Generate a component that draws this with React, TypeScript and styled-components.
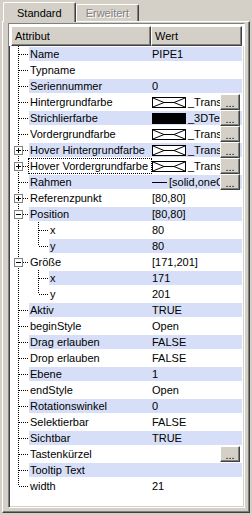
import React from 'react';
import styled, {createGlobalStyle} from 'styled-components';

const GlobalStyle = createGlobalStyle`
  html, body {
    margin: 0;
    padding: 0;
    background: #d4d0c8;
  }
  body {
    font-family: "Liberation Sans", Arial, sans-serif;
    font-size: 11px;
    color: #000;
  }
`;

const Window = styled.div`
  width: 252px;
  height: 515px;
  box-sizing: border-box;
  padding: 2px;
  display: flex;
  flex-direction: column;
  background: #d4d0c8;
`;

const TabStrip = styled.div`
  display: flex;
  align-items: flex-end;
  height: 19px;
  padding-left: 1px;
`;

const Tab = styled.div<{active?: boolean}>`
  box-sizing: border-box;
  height: ${({active}) => (active ? '20px' : '17px')};
  margin-bottom: ${({active}) => (active ? '-1px' : '0')};
  padding: 0 ${({active}) => (active ? '13px' : '9px')};
  display: flex;
  align-items: center;
  border-top: 1px solid #fff;
  border-left: 1px solid #fff;
  border-right: 1px solid #404040;
  box-shadow: inset -1px 0 0 #808080;
  border-radius: 2px 2px 0 0;
  color: ${({active}) => (active ? '#000' : '#808080')};
  text-shadow: ${({active}) => (active ? 'none' : '1px 1px 0 #fff')};
  position: relative;
  z-index: ${({active}) => (active ? 1 : 0)};
  background: #d4d0c8;
`;

const Panel = styled.div`
  flex: 1;
  box-sizing: border-box;
  border-top: 1px solid #fff;
  border-left: 1px solid #fff;
  border-right: 1px solid #404040;
  border-bottom: 1px solid #404040;
  box-shadow: inset -1px -1px 0 #808080;
  padding: 1px 4px 4px 5px;
  display: flex;
`;

const ListFrame = styled.div`
  flex: 1;
  box-sizing: border-box;
  border-top: 1px solid #808080;
  border-left: 1px solid #808080;
  border-right: 1px solid #fff;
  border-bottom: 1px solid #fff;
  box-shadow: inset 1px 1px 0 #404040, inset -1px -1px 0 #d4d0c8;
  padding: 2px;
  background: #fff;
  display: flex;
  flex-direction: column;
  overflow: hidden;
`;

const Header = styled.div`
  display: grid;
  grid-template-columns: 140px 1fr;
  height: 20px;
  margin: -2px -2px 0 -2px;
  padding: 2px 2px 0 2px;
  background: #fff;
`;

const HeaderCell = styled.div`
  box-sizing: border-box;
  background: #d4d0c8;
  border-top: 1px solid #fff;
  border-left: 1px solid #fff;
  border-right: 1px solid #404040;
  border-bottom: 1px solid #404040;
  box-shadow: inset -1px -1px 0 #808080;
  padding-left: 3px;
  display: flex;
  align-items: center;
`;

const Rows = styled.div`
  display: flex;
  flex-direction: column;
`;

const RowLine = styled.div`
  display: grid;
  grid-template-columns: 140px 1fr;
  height: 16px;
`;

const LabelCell = styled.div`
  display: flex;
  align-items: stretch;
  min-width: 0;
`;

const Label = styled.div<{shaded: boolean; focused?: boolean}>`
  flex: 1;
  min-width: 0;
  display: flex;
  align-items: center;
  padding-left: 1px;
  margin: 1px 0;
  white-space: nowrap;
  overflow: hidden;
  background: ${({shaded}) => (shaded ? '#d6dff7' : 'transparent')};
  outline: ${({focused}) => (focused ? '1px dotted #000' : 'none')};
  outline-offset: 0;
`;

const ValueCell = styled.div<{shaded: boolean}>`
  display: flex;
  align-items: center;
  min-width: 0;
  margin: 1px 0;
  padding-left: 1px;
  background: ${({shaded}) => (shaded ? '#d6dff7' : 'transparent')};
`;

const ValueText = styled.div`
  flex: 1;
  min-width: 0;
  display: flex;
  align-items: center;
  gap: 2px;
  white-space: nowrap;
  overflow: hidden;
`;

const DotsButton = styled.div`
  flex: none;
  box-sizing: border-box;
  width: 20px;
  height: 16px;
  margin: -1px 2px -1px 0;
  background: #d4d0c8;
  border-top: 1px solid #fff;
  border-left: 1px solid #fff;
  border-right: 1px solid #404040;
  border-bottom: 1px solid #404040;
  box-shadow: inset -1px -1px 0 #808080;
  display: flex;
  align-items: flex-end;
  justify-content: center;
  padding-bottom: 2px;
  line-height: 8px;
  font-size: 11px;
`;

const Swatch = styled.svg`
  flex: none;
  display: block;
`;

const Gutter = styled.svg`
  flex: none;
  display: block;
`;

type SwatchKind = 'none' | 'black' | 'line';

interface PropRow {
  label: string;
  value?: string;
  depth?: number;
  expander?: '+' | '-';
  swatch?: SwatchKind;
  button?: boolean;
  focused?: boolean;
  last?: boolean;
  lastChild?: boolean;
}

const ROWS: PropRow[] = [
  {label: 'Name', value: 'PIPE1'},
  {label: 'Typname', value: ''},
  {label: 'Seriennummer', value: '0'},
  {label: 'Hintergrundfarbe', value: '_Transparent', swatch: 'none', button: true},
  {label: 'Strichlierfarbe', value: '_3DText', swatch: 'black', button: true},
  {label: 'Vordergrundfarbe', value: '_Transparent', swatch: 'none', button: true},
  {label: 'Hover Hintergrundfarbe', value: '_Transparent', swatch: 'none', button: true, expander: '+'},
  {label: 'Hover Vordergrundfarbe', value: '_Transparent', swatch: 'none', button: true, expander: '+', focused: true},
  {label: 'Rahmen', value: '[solid,oneColor]', swatch: 'line', button: true},
  {label: 'Referenzpunkt', value: '[80,80]', expander: '+'},
  {label: 'Position', value: '[80,80]', expander: '-'},
  {label: 'x', value: '80', depth: 1},
  {label: 'y', value: '80', depth: 1, lastChild: true},
  {label: 'Größe', value: '[171,201]', expander: '-'},
  {label: 'x', value: '171', depth: 1},
  {label: 'y', value: '201', depth: 1, lastChild: true},
  {label: 'Aktiv', value: 'TRUE'},
  {label: 'beginStyle', value: 'Open'},
  {label: 'Drag erlauben', value: 'FALSE'},
  {label: 'Drop erlauben', value: 'FALSE'},
  {label: 'Ebene', value: '1'},
  {label: 'endStyle', value: 'Open'},
  {label: 'Rotationswinkel', value: '0'},
  {label: 'Selektierbar', value: 'FALSE'},
  {label: 'Sichtbar', value: 'TRUE'},
  {label: 'Tastenkürzel', value: '', button: true},
  {label: 'Tooltip Text', value: ''},
  {label: 'width', value: '21', last: true},
];

// Dotted tree connectors + expand box for one row
const TreeGutter: React.FC<{row: PropRow}> = ({row}) => {
  const depth = row.depth ?? 0;
  const width = depth === 0 ? 18 : 38;
  const dot = {stroke: '#000', strokeWidth: 1, strokeDasharray: '1 1', shapeRendering: 'crispEdges' as const};

  return (
    <Gutter width={width} height={16}>
      <line x1={7.5} y1={0} x2={7.5} y2={row.last ? 8 : 16} {...dot} />
      {depth === 0 && <line x1={8} y1={8.5} x2={17} y2={8.5} {...dot} />}
      {depth === 1 && (
        <>
          <line x1={27.5} y1={0} x2={27.5} y2={row.lastChild ? 8 : 16} {...dot} />
          <line x1={28} y1={8.5} x2={37} y2={8.5} {...dot} />
        </>
      )}
      {row.expander && (
        <g shapeRendering="crispEdges">
          <rect x={3.5} y={4.5} width={8} height={8} fill="#fff" stroke="#808080" />
          <line x1={5} y1={8.5} x2={10} y2={8.5} stroke="#000" />
          {row.expander === '+' && <line x1={7.5} y1={6} x2={7.5} y2={11} stroke="#000" />}
        </g>
      )}
    </Gutter>
  );
};

const ColorSwatch: React.FC<{kind: SwatchKind}> = ({kind}) => {
  if (kind === 'line') {
    return (
      <Swatch width={15} height={11}>
        <line x1={0} y1={5.5} x2={15} y2={5.5} stroke="#000" shapeRendering="crispEdges" />
      </Swatch>
    );
  }
  return (
    <Swatch width={34} height={11}>
      <rect x={0.5} y={0.5} width={33} height={10} fill={kind === 'black' ? '#000' : '#fff'} stroke="#000" shapeRendering="crispEdges" />
      {kind === 'none' && (
        <>
          <polyline points="1,1 12,5.5 1,10" fill="none" stroke="#000" />
          <line x1={12} y1={5.5} x2={22} y2={5.5} stroke="#000" shapeRendering="crispEdges" />
          <polyline points="33,1 22,5.5 33,10" fill="none" stroke="#000" />
        </>
      )}
    </Swatch>
  );
};

const App: React.FC = () => {
  return (
    <>
      <GlobalStyle />
      <Window>
        <TabStrip>
          <Tab active>Standard</Tab>
          <Tab>Erweitert</Tab>
        </TabStrip>
        <Panel>
          <ListFrame>
            <Header>
              <HeaderCell>Attribut</HeaderCell>
              <HeaderCell>Wert</HeaderCell>
            </Header>
            <Rows>
              {ROWS.map((row, i) => {
                const shaded = i % 2 === 0;
                return (
                  <RowLine key={`${row.label}-${i}`}>
                    <LabelCell>
                      <TreeGutter row={row} />
                      <Label shaded={shaded} focused={row.focused}>
                        {row.label}
                      </Label>
                    </LabelCell>
                    <ValueCell shaded={shaded}>
                      <ValueText>
                        {row.swatch && <ColorSwatch kind={row.swatch} />}
                        {row.value}
                      </ValueText>
                      {row.button && <DotsButton>...</DotsButton>}
                    </ValueCell>
                  </RowLine>
                );
              })}
            </Rows>
          </ListFrame>
        </Panel>
      </Window>
    </>
  );
};

export default App;
